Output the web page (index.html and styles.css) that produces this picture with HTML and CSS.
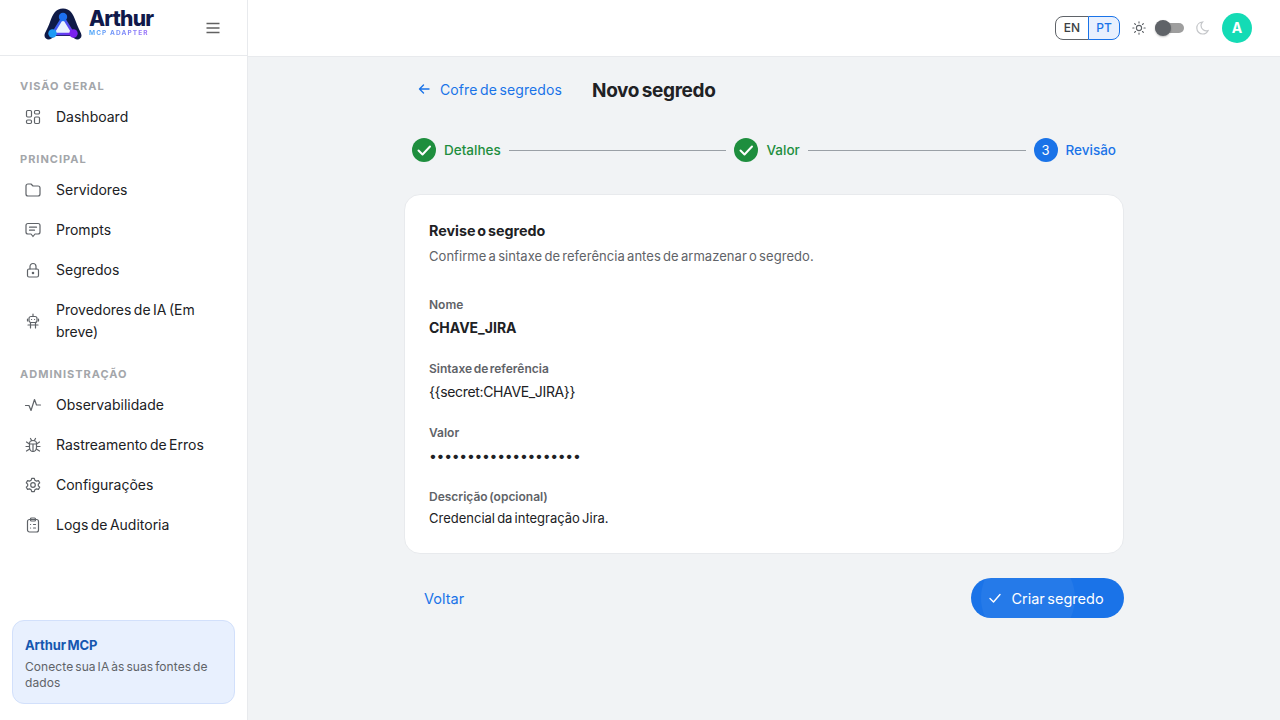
FILE: index.html
```html
<!DOCTYPE html>
<html lang="pt">
<head>
  <meta charset="UTF-8">
  <title>Novo segredo</title>
  <link rel="stylesheet" href="styles.css">
</head>
<body>
  <aside class="sidebar">
    <div class="sidebar-head">
      <div class="logo">
        <svg class="logo-mark" viewBox="0 0 38 32" width="38" height="32" fill="none">
          <defs>
            <linearGradient id="logoTri" x1="0" y1="0" x2="1" y2="1">
              <stop offset="0" stop-color="#1d7bf2"/>
              <stop offset="1" stop-color="#7a2cf0"/>
            </linearGradient>
          </defs>
          <path d="M0.500 27.500C0.500 25 3.500 21 6 14C9 5.500 12 0.500 19 0.500S29 5.500 32 14C34.500 21 37.500 25 37.500 27.500C37.500 31 33.500 32.500 30.500 30.500L27 28H11L7.500 30.500C4.500 32.500 0.500 31 0.500 27.500Z" fill="#0f1a47"/>
          <path d="M19 9L8.500 26H29.500Z" fill="#eaf1ff" stroke="url(#logoTri)" stroke-width="2.400" stroke-linejoin="round"/>
          <circle cx="19" cy="9" r="4.200" fill="#1d6ff0"/>
          <circle cx="8.500" cy="25.500" r="4.200" fill="#1e9bf5"/>
          <circle cx="29.500" cy="25.500" r="4.200" fill="#7a22ee"/>
        </svg>
        <div class="logo-text">
          <span class="logo-name">Arthur</span>
          <span class="logo-sub">MCP ADAPTER</span>
        </div>
      </div>
      <svg class="menu-btn" viewBox="0 0 14 12" width="14" height="12" fill="none" stroke="#616161" stroke-width="1.400">
        <path d="M0.500 1.500H13.500M0.500 6H13.500M0.500 10.500H13.500"/>
      </svg>
    </div>

    <nav class="nav">
      <div class="nav-label">VISÃO GERAL</div>
      <a class="nav-item">
        <svg class="nav-icon" viewBox="0 0 18 18"><rect x="2.500" y="2.500" width="5" height="6.500" rx="1.200"/><rect x="10.500" y="2.500" width="5" height="3.500" rx="1.200"/><rect x="2.500" y="12" width="5" height="3.500" rx="1.200"/><rect x="10.500" y="9" width="5" height="6.500" rx="1.200"/></svg>
        <span>Dashboard</span>
      </a>

      <div class="nav-label">PRINCIPAL</div>
      <a class="nav-item">
        <svg class="nav-icon" viewBox="0 0 18 18"><path d="M2 5C2 3.900 2.800 3 4 3H7L9 5H14C15.200 5 16 5.900 16 7V13C16 14.100 15.200 15 14 15H4C2.800 15 2 14.100 2 13Z"/></svg>
        <span>Servidores</span>
      </a>
      <a class="nav-item">
        <svg class="nav-icon" viewBox="0 0 18 18"><path d="M4 2.500H14C15.200 2.500 16 3.300 16 4.500V11C16 12.200 15.200 13 14 13H11L9 15.500L7 13H4C2.800 13 2 12.200 2 11V4.500C2 3.300 2.800 2.500 4 2.500Z"/><path d="M5.500 6.200H12.500M5.500 9.200H10.500"/></svg>
        <span>Prompts</span>
      </a>
      <a class="nav-item">
        <svg class="nav-icon" viewBox="0 0 18 18"><rect x="3.500" y="8" width="11" height="8" rx="1.500"/><path d="M6 8V5.500C6 3.700 7.300 2.500 9 2.500S12 3.700 12 5.500V8"/><circle cx="9" cy="12" r="0.700"/></svg>
        <span>Segredos</span>
      </a>
      <a class="nav-item">
        <svg class="nav-icon" viewBox="0 0 18 18"><rect x="5" y="4.500" width="8" height="6" rx="2"/><path d="M9 2V4.500M3.500 7V9M14.500 7V9M6.500 10.500V16M11.500 10.500V16M4 13H14M7.500 7.500H7.600M10.500 7.500H10.600"/></svg>
        <span>Provedores de IA (Em breve)</span>
      </a>

      <div class="nav-label">ADMINISTRAÇÃO</div>
      <a class="nav-item">
        <svg class="nav-icon" viewBox="0 0 18 18"><path d="M1.500 9.500H5L7 14.500L10.500 3.500L12.500 9H16.500"/></svg>
        <span>Observabilidade</span>
      </a>
      <a class="nav-item">
        <svg class="nav-icon" viewBox="0 0 18 18"><path d="M5.500 7.500C5.500 5.500 7 4.500 9 4.500S12.500 5.500 12.500 7.500V11.500C12.500 13.500 11 15.500 9 15.500S5.500 13.500 5.500 11.500Z"/><path d="M6.500 2.500L7.800 4.700M11.500 2.500L10.200 4.700M5.500 8H12.500M9 8V15.500M2.500 6L5.500 8M15.500 6L12.500 8M2 10.500H5.500M16 10.500H12.500M2.500 15L5.700 13M15.500 15L12.300 13"/></svg>
        <span>Rastreamento de Erros</span>
      </a>
      <a class="nav-item">
        <svg class="nav-icon" viewBox="0 0 18 18"><path d="M7.700 2.300H10.300L10.800 4.200L12.500 5.100L14.400 4.600L15.700 6.800L14.300 8.200V9.800L15.700 11.200L14.400 13.400L12.500 12.900L10.800 13.800L10.300 15.700H7.700L7.200 13.800L5.500 12.900L3.600 13.400L2.300 11.200L3.700 9.800V8.200L2.300 6.800L3.600 4.600L5.500 5.100L7.200 4.200Z"/><circle cx="9" cy="9" r="2.300"/></svg>
        <span>Configurações</span>
      </a>
      <a class="nav-item">
        <svg class="nav-icon" viewBox="0 0 18 18"><rect x="3.500" y="3.500" width="11" height="12.500" rx="2"/><rect x="6.500" y="2" width="5" height="3" rx="1"/><path d="M6.500 8.500H6.600M6.500 12H6.600M9.500 8.500H11.500M9.500 12H11.500"/></svg>
        <span>Logs de Auditoria</span>
      </a>
    </nav>

    <div class="promo">
      <div class="promo-title">Arthur MCP</div>
      <div class="promo-text">Conecte sua IA às suas fontes de dados</div>
    </div>
  </aside>

  <div class="content">
    <header class="topbar">
      <div class="lang">
        <span class="lang-btn">EN</span>
        <span class="lang-btn lang-active">PT</span>
      </div>
      <svg class="theme-icon" viewBox="0 0 14 14" width="14" height="14" fill="none" stroke="#5f6368" stroke-width="1.100" stroke-linecap="round">
        <circle cx="7" cy="7" r="2.600"/>
        <path d="M7 0.800V2M7 12V13.200M0.800 7H2M12 7H13.200M2.600 2.600L3.500 3.500M10.500 10.500L11.400 11.400M2.600 11.400L3.500 10.500M10.500 3.500L11.400 2.600"/>
      </svg>
      <div class="switch"><span class="switch-thumb"></span></div>
      <svg class="theme-icon" viewBox="0 0 14 14" width="14" height="14" fill="none" stroke="#c4c6c9" stroke-width="1.200">
        <path d="M7.500 1C4.300 1.200 1.800 3.700 1.800 7C1.800 10.300 4.400 13 7.700 13C10 13 12 11.700 13 9.700C9.500 10.600 6 8 6 4.600C6 3.300 6.500 2 7.500 1Z"/>
      </svg>
      <div class="avatar">A</div>
    </header>

    <main class="main">
      <div class="page">
        <div class="page-head">
          <a class="back-link">
            <svg viewBox="0 0 14 14" width="14" height="14" fill="none" stroke="#1a73e8" stroke-width="1.400" stroke-linecap="round" stroke-linejoin="round"><path d="M12 7H2.500M6.500 3L2.500 7L6.500 11"/></svg>
            <span>Cofre de segredos</span>
          </a>
          <h1>Novo segredo</h1>
        </div>

        <div class="stepper">
          <div class="step step-done">
            <span class="step-circle"><svg viewBox="0 0 24 24" width="24" height="24" fill="none" stroke="#fff" stroke-width="2" stroke-linecap="round" stroke-linejoin="round"><path d="M6.500 12.500L10.500 16.500L18 8.500"/></svg></span>
            <span>Detalhes</span>
          </div>
          <div class="step-line"></div>
          <div class="step step-done">
            <span class="step-circle"><svg viewBox="0 0 24 24" width="24" height="24" fill="none" stroke="#fff" stroke-width="2" stroke-linecap="round" stroke-linejoin="round"><path d="M6.500 12.500L10.500 16.500L18 8.500"/></svg></span>
            <span>Valor</span>
          </div>
          <div class="step-line"></div>
          <div class="step step-current">
            <span class="step-circle">3</span>
            <span>Revisão</span>
          </div>
        </div>

        <section class="card">
          <h2>Revise o segredo</h2>
          <p class="card-sub">Confirme a sintaxe de referência antes de armazenar o segredo.</p>

          <div class="field">
            <div class="field-label">Nome</div>
            <div class="field-value value-strong">CHAVE_JIRA</div>
          </div>
          <div class="field">
            <div class="field-label">Sintaxe de referência</div>
            <div class="field-value value-code">{{secret:CHAVE_JIRA}}</div>
          </div>
          <div class="field">
            <div class="field-label">Valor</div>
            <div class="field-value value-dots">••••••••••••••••••••</div>
          </div>
          <div class="field field-last">
            <div class="field-label">Descrição (opcional)</div>
            <div class="field-value value-small">Credencial da integração Jira.</div>
          </div>
        </section>

        <div class="actions">
          <a class="btn-back">Voltar</a>
          <button class="btn-create" type="button">
            <svg viewBox="0 0 14 14" width="14" height="14" fill="none" stroke="#fff" stroke-width="1.400" stroke-linecap="round" stroke-linejoin="round"><path d="M2 7.500L5.500 11L12 3.500"/></svg>
            <span>Criar segredo</span>
          </button>
        </div>
      </div>
    </main>
  </div>
</body>
</html>
```

FILE: styles.css
```css
* {
  box-sizing: border-box;
}

body {
  margin: 0;
  height: 720px;
  display: flex;
  overflow: hidden;
  background: #fff;
  color: #202124;
  font-family: Inter, "Noto Sans", sans-serif;
  word-spacing: -1.5px;
}

h1, h2, p {
  margin: 0;
}

.sidebar {
  width: 248px;
  flex-shrink: 0;
  display: flex;
  flex-direction: column;
  border-right: 1px solid #e8eaed;
}

.sidebar-head {
  height: 56px;
  flex-shrink: 0;
  display: flex;
  align-items: center;
  padding-left: 44px;
  border-bottom: 1px solid #e8eaed;
}

.logo {
  display: flex;
  gap: 7px;
  width: 162px;
  align-items: center;
  margin-top: -8px;
}

.logo-text {
  display: flex;
  flex-direction: column;
  margin-top: -2px;
}

.logo-name {
  color: #10194a;
  font-size: 21px;
  line-height: 22px;
  font-weight: 800;
  letter-spacing: -0.8px;
}

.logo-sub {
  font-size: 6.5px;
  line-height: 7px;
  font-weight: 700;
  letter-spacing: 1.1px;
  word-spacing: 0;
  width: 60px;
  white-space: nowrap;
  color: transparent;
  background: linear-gradient(90deg, #4aa8f8, #9a6cf8);
  -webkit-background-clip: text;
  background-clip: text;
}

.nav {
  padding: 8px 8px 0;
  flex: 1;
}

.nav-label {
  margin: 11px 0 0 12px;
  height: 22px;
  line-height: 22px;
  font-size: 11px;
  font-weight: 700;
  letter-spacing: 1px;
  word-spacing: 0;
  color: #a3a6aa;
}

.nav-item {
  display: flex;
  align-items: center;
  gap: 14px;
  padding: 9px 12px 9px 16px;
  font-size: 14px;
  line-height: 22px;
  color: #202124;
}

.nav-icon {
  width: 18px;
  height: 18px;
  flex-shrink: 0;
  fill: none;
  stroke: #5f6368;
  stroke-width: 1.200;
  stroke-linecap: round;
  stroke-linejoin: round;
}

.promo {
  margin: 0 12px 16px;
  height: 84px;
  padding: 14px 12px;
  background: #e8f0fe;
  border: 1px solid #d2e0fb;
  border-radius: 12px;
}

.promo-title {
  color: #1557b0;
  font-size: 13px;
  line-height: 20px;
  font-weight: 700;
  letter-spacing: -0.1px;
}

.promo-text {
  margin-top: 4px;
  color: #5f6368;
  font-size: 12px;
  line-height: 16px;
  letter-spacing: 0.08px;
}

.content {
  flex: 1;
  display: flex;
  flex-direction: column;
  min-width: 0;
}

.topbar {
  height: 57px;
  flex-shrink: 0;
  display: flex;
  align-items: center;
  justify-content: flex-end;
  padding: 0 28px 1px 0;
  border-bottom: 1px solid #e8eaed;
}

.lang {
  display: flex;
  margin-right: 12px;
}

.lang-btn {
  height: 24px;
  width: 34px;
  display: flex;
  align-items: center;
  justify-content: center;
  font-size: 12px;
  font-weight: 500;
  color: #3c4043;
  border: 1px solid #5f6368;
  border-radius: 8px 0 0 8px;
}

.lang-active {
  width: 32px;
  margin-left: -1px;
  color: #1a73e8;
  background: #e8f0fe;
  border-color: #1a73e8;
  border-radius: 0 8px 8px 0;
}

.switch {
  position: relative;
  width: 29px;
  height: 10px;
  margin: 0 11px 0 9px;
  border-radius: 5px;
  background: #9e9e9e;
}

.switch-thumb {
  position: absolute;
  left: 0;
  top: -3px;
  width: 16px;
  height: 16px;
  border-radius: 50%;
  background: #5f6368;
  box-shadow: 0 1px 2px rgba(0,0,0,0.25);
}

.avatar {
  width: 30px;
  height: 30px;
  margin-left: 13px;
  border-radius: 50%;
  display: flex;
  align-items: center;
  justify-content: center;
  background: #14dbb5;
  color: #fff;
  font-size: 14px;
  font-weight: 700;
}

.main {
  flex: 1;
  background: #f1f3f5;
  display: flex;
  justify-content: center;
}

.page {
  width: 720px;
}

.page-head {
  display: flex;
  align-items: center;
  height: 66px;
  padding: 0 0 0 13px;
}

.back-link {
  display: flex;
  align-items: center;
  gap: 9px;
  margin-bottom: 2px;
  color: #1a73e8;
  font-size: 14px;
  font-weight: 400;
  letter-spacing: 0.1px;
  width: 175px;
}

h1 {
  font-size: 19px;
  font-weight: 700;
  color: #202124;
  letter-spacing: -0.35px;
}

.stepper {
  height: 52px;
  margin-top: 1px;
  padding: 0 8px;
  display: flex;
  align-items: center;
}

.step {
  display: flex;
  align-items: center;
  gap: 8px;
  font-size: 13.500px;
  font-weight: 500;
  word-spacing: 0;
}

.step-circle {
  width: 24px;
  height: 24px;
  border-radius: 50%;
  display: flex;
  align-items: center;
  justify-content: center;
  color: #fff;
  font-size: 13px;
  font-weight: 400;
}

.step-done {
  color: #1e8e3e;
}

.step-done .step-circle {
  background: #1e8e3e;
}

.step-current {
  color: #1a73e8;
}

.step-current .step-circle {
  background: #1a73e8;
}

.step-line {
  flex: 1;
  height: 1px;
  margin: 0 8px;
  background: #9aa0a6;
}

.card {
  height: 360px;
  margin-top: 18px;
  padding: 24px;
  background: #fff;
  border: 1px solid #e8eaed;
  border-radius: 16px;
}

h2 {
  font-size: 14.300px;
  line-height: 24px;
  font-weight: 700;
  color: #202124;
}

.card-sub {
  margin-top: 1px;
  color: #5f6368;
  font-size: 13px;
  line-height: 24px;
  letter-spacing: 0.05px;
}

.field {
  margin-top: 16px;
}

.card-sub + .field {
  margin-top: 24px;
}

.field-label {
  height: 24px;
  line-height: 26px;
  font-size: 12px;
  font-weight: 600;
  color: #5f6368;
}

.field-value {
  height: 24px;
  line-height: 24px;
  font-size: 14px;
  color: #202124;
}

.value-strong {
  font-weight: 700;
}

.value-code {
  letter-spacing: -0.35px;
}

.value-dots {
  letter-spacing: -0.3px;
}

.value-small {
  font-size: 13px;
  height: 20px;
  line-height: 20px;
}

.actions {
  margin-top: 24px;
  display: flex;
  align-items: center;
  justify-content: space-between;
}

.btn-back {
  padding-left: 20px;
  color: #1a73e8;
  font-size: 14.500px;
  font-weight: 400;
}

.btn-create {
  position: relative;
  overflow: hidden;
  width: 153px;
  height: 40px;
  padding: 0 3px 0 0;
  display: flex;
  align-items: center;
  justify-content: center;
  gap: 9px;
  border: none;
  border-radius: 20px;
  background: #1a73e8;
  color: #fff;
  font-family: inherit;
  font-size: 14.500px;
  font-weight: 400;
  word-spacing: -1.500px;
}

/* ripple left over from the click */
.btn-create::before {
  content: "";
  position: absolute;
  left: 10px;
  top: -27px;
  width: 94px;
  height: 94px;
  border-radius: 50%;
  background: rgba(255,255,255,0.05);
}
```
